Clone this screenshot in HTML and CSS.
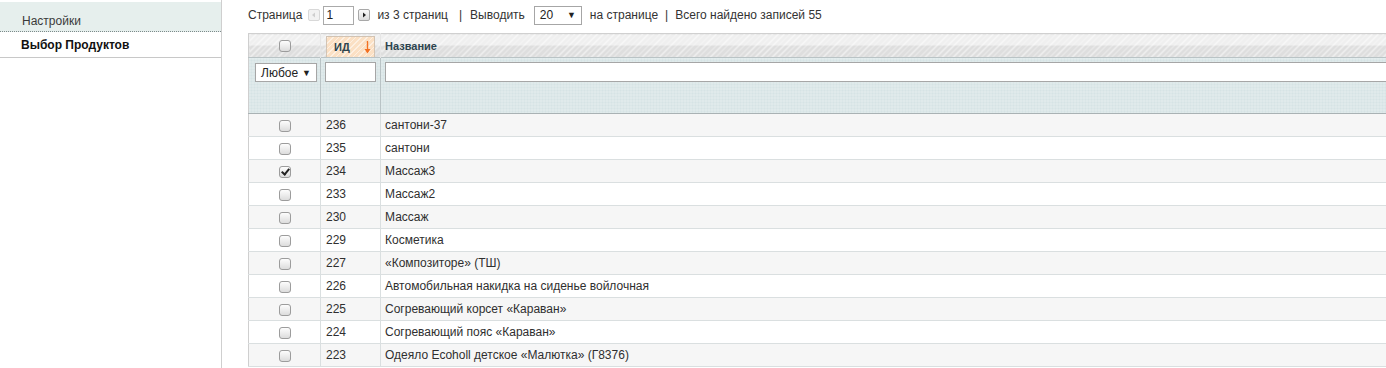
FILE: index.html
```html
<!DOCTYPE html>
<html lang="ru">
<head>
    <meta charset="UTF-8">
    <title>Выбор Продуктов</title>
    <link rel="stylesheet" href="styles.css">
</head>
<body>
    <div class="layout">
        <aside class="side">
            <ul class="tabs">
                <li class="tab">Настройки</li>
                <li class="tab active">Выбор Продуктов</li>
            </ul>
        </aside>

        <main class="main">
            <!-- pager line -->
            <div class="pager">
                <span>Страница</span>
                <span class="arrow prev disabled"><svg width="6" height="6" viewBox="0 0 6 6"><path d="M4 0.5 L1 3 L4 5.5 Z"/></svg></span>
                <input class="page-input" type="text" value="1">
                <span class="arrow next"><svg width="6" height="6" viewBox="0 0 6 6"><path d="M2 0.5 L5 3 L2 5.5 Z"/></svg></span>
                <span>из 3 страниц</span>
                <span class="sep first">|</span>
                <span class="label">Выводить</span>
                <span class="select limit">20 <b>▼</b></span>
                <span>на странице</span>
                <span class="sep">|</span>
                <span>Всего найдено записей 55</span>
            </div>

            <table class="grid">
                <colgroup>
                    <col class="c-check">
                    <col class="c-id">
                    <col class="c-name">
                </colgroup>
                <thead>
                    <tr class="headings">
                        <th class="center"><span class="cb"></span></th>
                        <th>
                            <span class="sort">ИД
                                <svg class="sort-arrow" width="7" height="13" viewBox="0 0 7 13"><path d="M3.5 0 V11" stroke="#f37021" stroke-width="1.4"/><path d="M0.5 8 L3.5 12.5 L6.5 8 Z" fill="#f37021"/></svg>
                            </span>
                        </th>
                        <th><span class="title">Название</span></th>
                    </tr>
                    <tr class="filter">
                        <th><span class="select any">Любое <b>▼</b></span></th>
                        <th><input class="f-input" type="text"></th>
                        <th><input class="f-input" type="text"></th>
                    </tr>
                </thead>
                <tbody>
                    <tr class="odd"><td class="center"><span class="cb"></span></td><td>236</td><td>сантони-37</td></tr>
                    <tr><td class="center"><span class="cb"></span></td><td>235</td><td>сантони</td></tr>
                    <tr class="odd"><td class="center"><span class="cb checked"></span></td><td>234</td><td>Массаж3</td></tr>
                    <tr><td class="center"><span class="cb"></span></td><td>233</td><td>Массаж2</td></tr>
                    <tr class="odd"><td class="center"><span class="cb"></span></td><td>230</td><td>Массаж</td></tr>
                    <tr><td class="center"><span class="cb"></span></td><td>229</td><td>Косметика</td></tr>
                    <tr class="odd"><td class="center"><span class="cb"></span></td><td>227</td><td>«Композиторе» (ТШ)</td></tr>
                    <tr><td class="center"><span class="cb"></span></td><td>226</td><td>Автомобильная накидка на сиденье войлочная</td></tr>
                    <tr class="odd"><td class="center"><span class="cb"></span></td><td>225</td><td>Согревающий корсет «Караван»</td></tr>
                    <tr><td class="center"><span class="cb"></span></td><td>224</td><td>Согревающий пояс «Караван»</td></tr>
                    <tr class="odd"><td class="center"><span class="cb"></span></td><td>223</td><td>Одеяло Ecoholl детское «Малютка» (Г8376)</td></tr>
                </tbody>
            </table>
        </main>
    </div>
</body>
</html>
```

FILE: styles.css
```css
html, body {
    margin: 0;
    padding: 0;
    background: #fff;
    color: #2f2f2f;
    font-family: "Liberation Sans", Arial, sans-serif;
    font-size: 12px;
    overflow: hidden;
}

.layout {
    display: flex;
    height: 368px;
}

/* sidebar */

.side {
    width: 221px;
    flex: none;
    border-right: 1px solid #cfcfcf;
    padding-top: 2px;
}

.tabs {
    list-style: none;
    margin: 0;
    padding: 0;
}

.tab {
    height: 19px;
    line-height: 18px;
    padding: 10px 0 0 22px;
    background: #e6efed;
    border-bottom: 1px dotted #7d8a8a;
    color: #3a3a3a;
}

.tab.active {
    height: 24px;
    line-height: 24px;
    padding: 1px 0 0 21px;
    background: #fff;
    border-bottom: 1px solid #c8c8c8;
    font-weight: bold;
    color: #111;
}

/* main */

.main {
    flex: 1;
    min-width: 0;
    padding-left: 26px;
}

.pager {
    display: flex;
    align-items: center;
    height: 30px;
    margin-bottom: 3px;
    white-space: nowrap;
    color: #333;
}

.pager > span {
    margin-right: 7px;
}

.pager .sep {
    margin: 0 7px 0 0;
}

.pager .sep.first {
    margin: 0 8px 0 4px;
}

.pager .label {
    margin-right: 9px;
}

.arrow {
    display: inline-flex;
    align-items: center;
    justify-content: center;
    width: 10px;
    height: 10px;
    border: 1px solid #a8a8a8;
    border-radius: 2px;
    background: linear-gradient(#fafafa, #dcdcdc);
}

.pager .arrow {
    margin-right: 3px;
}

.pager .arrow.prev {
    margin-left: -1px;
}

.arrow svg {
    fill: #222;
}

.arrow.disabled {
    border-color: #d8d8d8;
    background: #f2f2f2;
}

.arrow.disabled svg {
    fill: #cfcfcf;
}

.page-input {
    box-sizing: border-box;
    width: 31px;
    height: 19px;
    padding: 0 2px;
    margin: 0 4px 0 0;
    border: 1px solid #aaa;
    font-family: inherit;
    font-size: 12px;
    color: #222;
}

.pager .arrow.next {
    margin-right: 7px;
}

.select {
    display: inline-flex;
    justify-content: space-between;
    align-items: center;
    box-sizing: border-box;
    height: 19px;
    padding: 0 5px;
    border: 1px solid #a6a6a6;
    background: #fff;
    color: #222;
}

.select b {
    font-size: 9px;
}

.pager .select.limit {
    width: 48px;
    margin-right: 8px;
}

/* grid */

.grid {
    width: 1160px;
    border-collapse: collapse;
    table-layout: fixed;
    border-left: 1px solid #cfcfcf;
}

.c-check { width: 72px; }
.c-id { width: 60px; }

.grid th,
.grid td {
    padding: 0 0 0 5px;
    text-align: left;
    border-right: 1px solid #dadfe0;
}

.grid th:nth-child(3),
.grid td:nth-child(3) {
    padding-left: 4px;
}

.grid .center {
    text-align: center;
    padding: 0;
}

.headings th {
    height: 23px;
    padding-top: 0;
    padding-bottom: 0;
    border-top: 1px solid #d0d0d0;
    border-right: 1px solid #e6e6e6;
    background:
        repeating-linear-gradient(135deg, rgba(255,255,255,0.55) 0 1px, transparent 1px 4px),
        linear-gradient(#efefef 0, #efefef 50%, #dedede 50%, #dedede 100%);
    font-size: 11px;
    color: #2d444f;
    vertical-align: middle;
}

.headings th:nth-child(2) {
    padding: 0 5px;
    vertical-align: bottom;
}

.headings .sort {
    display: flex;
    justify-content: space-between;
    align-items: center;
    box-sizing: border-box;
    height: 21px;
    padding: 0 3px 0 7px;
    border: 1px solid #d2c3b3;
    border-bottom: none;
    background:
        repeating-linear-gradient(135deg, rgba(255,255,255,0.5) 0 1px, transparent 1px 4px),
        #fbe0c4;
}

.headings .title {
    display: block;
    padding-top: 1px;
}

.filter th {
    height: 50px;
    border-top: 1px solid #b9c3c5;
    border-bottom: 1px solid #a9b2b4;
    border-right: 1px solid #b9c3c5;
    background:
        repeating-linear-gradient(90deg, rgba(255,255,255,0.25) 0 1px, transparent 1px 3px),
        repeating-linear-gradient(0deg, rgba(255,255,255,0.25) 0 1px, transparent 1px 3px),
        #d6e3e5;
    vertical-align: top;
    padding-top: 4px;
    font-weight: normal;
}

.filter th:first-child {
    padding: 5px 0 0 6px;
}

.filter th:nth-child(2) {
    padding: 4px 0 0 4px;
}

.filter .select.any {
    width: 62px;
    font-size: 12px;
}

.f-input {
    display: block;
    box-sizing: border-box;
    width: 100%;
    height: 20px;
    margin: 0;
    border: 1px solid #a6a6a6;
    background: #fff;
}

.filter th:nth-child(2) .f-input {
    width: 51px;
}

.grid tbody td {
    height: 22px;
    border-bottom: 1px solid #dadfe0;
    color: #2f2f2f;
}

.grid tbody tr.odd td {
    background: #f6f6f6;
}

.cb {
    display: inline-block;
    box-sizing: border-box;
    width: 12px;
    height: 12px;
    border: 1px solid #9c9c9c;
    border-radius: 3px;
    background: linear-gradient(#fdfdfd, #dcdcdc);
    vertical-align: middle;
    position: relative;
}

.cb.checked::after {
    content: "";
    position: absolute;
    left: 3px;
    top: 0;
    width: 3px;
    height: 6px;
    border: solid #222;
    border-width: 0 2px 2px 0;
    transform: rotate(40deg);
}
```
